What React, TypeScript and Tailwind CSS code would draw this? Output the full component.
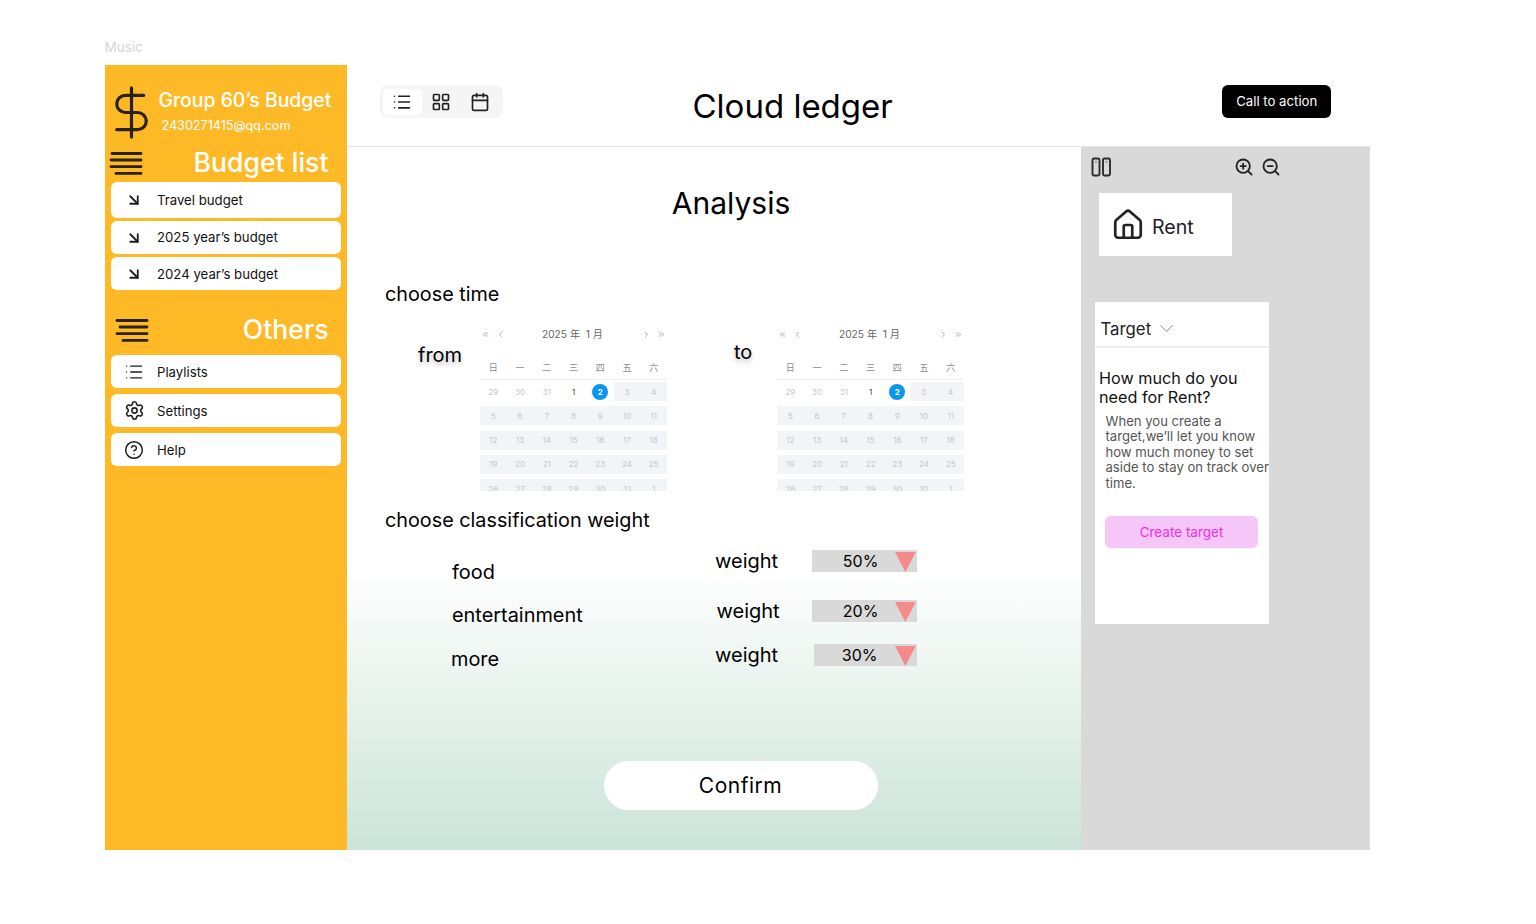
import { ArrowDownRight, Calendar, ChevronDown, ChevronLeft, ChevronRight, ChevronsLeft, ChevronsRight, CircleHelp, DollarSign, House, LayoutGrid, List, Settings, ZoomIn, ZoomOut } from "lucide-react";
import type { ReactNode } from "react";

const Bars = ({ first }: { first?: boolean }) => (
  <svg width="34" height="25" viewBox="0 0 34 25" fill="none" stroke="#2a2211" strokeWidth="2.8" strokeLinecap="round">
    {first ? (
      <>
        <path d="M3 2.5H32" /><path d="M2 9H32" /><path d="M2 15.7H32" /><path d="M7 22.4H32" />
      </>
    ) : (
      <>
        <path d="M2 2.5H32" /><path d="M5 9H32" /><path d="M2 15.7H32" /><path d="M8 22.4H32" />
      </>
    )}
  </svg>
);

const Item = ({ icon, label, cls, textCls }: { icon: ReactNode; label: string; cls: string; textCls: string }) => (
  <div className={`flex items-center bg-white rounded-[6px] text-[13.2px] text-[#111] ${cls}`}>
    <span className="w-[46px] flex justify-center text-[#1e1e1e]">{icon}</span>
    <span className={textCls}>{label}</span>
  </div>
);

const weeks = [
  ["29", "30", "31", "1", "2", "3", "4"],
  ["5", "6", "7", "8", "9", "10", "11"],
  ["12", "13", "14", "15", "16", "17", "18"],
  ["19", "20", "21", "22", "23", "24", "25"],
  ["26", "27", "28", "29", "30", "31", "1"],
];

const CalendarBox = () => (
  <div className="w-[187px] h-[167.5px] overflow-hidden text-[8px] text-[#c4c7cc]">
    <div className="h-[22px] flex items-center justify-between px-[1px] text-[#8d9095]">
      <div className="flex gap-[6px]">
        <ChevronsLeft size={9} />
        <ChevronLeft size={9} />
      </div>
      <span className="text-[10.2px] text-[#666] pr-[2px]">2025 年&nbsp; 1 月</span>
      <div className="flex gap-[6px]">
        <ChevronRight size={9} />
        <ChevronsRight size={9} />
      </div>
    </div>
    <div className="mt-[11px] h-[23px] flex items-center border-b border-[#eceef1] text-[#8a8d92]">
      {["日", "一", "二", "三", "四", "五", "六"].map((d) => (
        <span key={d} className="flex-1 text-center text-[9px]">{d}</span>
      ))}
    </div>
    <div className="mt-[2.5px] flex flex-col gap-[5.3px]">
      {weeks.map((w, i) => (
        <div key={i} className={`flex items-center h-[19px] shrink-0 ${i === 0 ? "" : "bg-[#f3f4f8]"}`}>
          {w.map((d, j) => (
            <span key={j} className={`flex-1 h-full flex items-center justify-center ${i === 0 && j > 4 ? "bg-[#f3f4f8]" : ""} ${i === 0 && j === 3 ? "text-[#444]" : ""}`}>
              {i === 0 && j === 4 ? (
                <span className="w-[16px] h-[16px] rounded-full bg-[#0d96ee] text-white font-bold flex items-center justify-center">2</span>
              ) : d}
            </span>
          ))}
        </div>
      ))}
    </div>
  </div>
);

const WeightRow = ({ value, cls, barCls, textCls }: { value: string; cls: string; barCls: string; textCls: string }) => (
  <div className={`flex items-center justify-between ${cls}`}>
    <span className="text-[20px] leading-none">weight</span>
    <div className={`h-[22px] bg-[#d9d9d9] flex items-center text-[16px] ${barCls}`}>
      <span className={`text-center ${textCls}`}>{value}</span>
      <svg width="22" height="21" viewBox="0 0 22 21"><polygon points="0,1 21,1 10.5,21" fill="#f58a8b" /></svg>
    </div>
  </div>
);

export default function App() {
  return (
    <div className="w-[1536px] h-[924px] bg-white pl-[104.5px] pt-[40px] font-['Inter','Noto_Sans_CJK_SC',sans-serif] text-black overflow-hidden">
      <div className="h-[25px] text-[13.5px] leading-[15px] text-[#d6d6d6]">Music</div>
      <div className="flex w-[1266px] h-[784.5px]">
        <aside className="w-[242.5px] shrink-0 bg-[#feb927] text-white px-[6.5px]">
          <div className="flex h-[77px] pt-[17.5px] -ml-[6.5px]">
            <DollarSign size={59} strokeWidth={1.3} color="#2a2211" className="ml-[-2.5px] shrink-0" />
            <div className="-ml-[2.5px] pt-[5.5px] whitespace-nowrap">
              <div className="text-[19.4px] leading-[24px] font-medium">Group 60’s Budget</div>
              <div className="text-[12.6px] leading-[16px] mt-[6px] ml-[3px]">2430271415@qq.com</div>
            </div>
          </div>
          <div className="flex items-center justify-between h-[40px] pt-[2px] -ml-[2px] pr-[12px]">
            <Bars first />
            <span className="text-[26.6px] font-medium">Budget list</span>
          </div>
          <div className="flex flex-col gap-[3px]">
            <Item cls="h-[36px]" textCls="pt-[1px]" icon={<ArrowDownRight size={18} strokeWidth={2.4} />} label="Travel budget" />
            <Item cls="h-[33px]" textCls="pt-[1px]" icon={<ArrowDownRight size={18} strokeWidth={2.4} />} label="2025 year’s budget" />
            <Item cls="h-[33px]" textCls="pt-[2px]" icon={<ArrowDownRight size={18} strokeWidth={2.4} />} label="2024 year’s budget" />
          </div>
          <div className="flex items-center justify-between h-[65px] pt-[15px] pl-[3.5px] pr-[12px]">
            <Bars />
            <span className="text-[26.6px] font-medium">Others</span>
          </div>
          <div className="flex flex-col gap-[6px]">
            <Item cls="h-[33px]" textCls="pt-[2px]" icon={<List size={20} strokeWidth={1.6} />} label="Playlists" />
            <Item cls="h-[33px]" textCls="pt-[2px]" icon={<Settings size={21} strokeWidth={1.8} />} label="Settings" />
            <Item cls="h-[33px]" textCls="pt-[2px]" icon={<CircleHelp size={20} strokeWidth={1.8} />} label="Help" />
          </div>
        </aside>

        <div className="flex-1 flex flex-col min-w-0">
          <header className="h-[82px] shrink-0 flex items-center border-b-[1.5px] border-[#e6e6e6]">
            <div className="ml-[32.5px] -mt-[8px] w-[123px] h-[33px] bg-[#f5f5f5] rounded-[8px] flex items-center px-[3px] text-[#222]">
              <span className="w-[39px] h-[26px] bg-white rounded-[5px] flex items-center justify-center"><List size={20} strokeWidth={1.9} /></span>
              <span className="w-[39px] flex justify-center"><LayoutGrid size={20} strokeWidth={2} /></span>
              <span className="w-[39px] flex justify-center"><Calendar size={20} strokeWidth={2} /></span>
            </div>
            <h1 className="ml-[190px] text-[33px] font-normal leading-none mt-[1px]">Cloud ledger</h1>
            <div className="ml-[329.5px] -mt-[8px] w-[109px] h-[33px] bg-black text-white rounded-[6px] flex items-center justify-center text-[13.2px]">Call to action</div>
          </header>
          <div className="flex-1 flex min-h-0">
            <main className="w-[734px] h-full bg-gradient-to-b from-white from-[60%] to-[#cbe4d8]">
              <h2 className="text-[30px] leading-none font-normal text-center pt-[40.5px] w-[768px]">Analysis</h2>
              <div className="ml-[38px] mt-[62px] text-[19.8px] leading-[28px]">choose time</div>
              <div className="flex mt-[16px]">
                <span className="ml-[71px] mt-[17px] text-[20px] leading-[28px] w-[62px] [text-shadow:0_3px_4px_#0004]">from</span>
                <CalendarBox />
                <span className="ml-[67px] mt-[14px] text-[20px] leading-[28px] w-[43px] [text-shadow:0_3px_4px_#0004]">to</span>
                <CalendarBox />
              </div>
              <div className="ml-[38px] mt-[15px] text-[19.8px] leading-[28px]">choose classification weight</div>
              <div className="flex mt-[16px]">
                <div className="ml-[105px] w-[263px] pt-[8px] text-[19.9px] leading-[28px] flex flex-col gap-[15px]">
                  <span>food</span>
                  <span>entertainment</span>
                  <span className="-ml-[1px] mt-[1px]">more</span>
                </div>
                <div className="w-[202px] flex flex-col">
                  <WeightRow value="50%" cls="" barCls="w-[105px]" textCls="w-[84px] pl-[14px]" />
                  <WeightRow value="20%" cls="mt-[28px] pl-[1.5px]" barCls="w-[105px]" textCls="w-[84px] pl-[14px]" />
                  <WeightRow value="30%" cls="mt-[22px]" barCls="w-[103px]" textCls="w-[82px] pl-[10px]" />
                </div>
              </div>
              <div className="mt-[88px] ml-[256.5px] w-[274px] h-[49px] bg-white rounded-full flex items-center justify-center text-[21px] font-normal tracking-[0.5px]">Confirm</div>
            </main>
            <section className="w-[289px] shrink-0 bg-[#d9d9d9] text-[#222]">
              <div className="flex items-center justify-between h-[40px] pl-[10px] pr-[89px]">
                <svg width="21" height="20" viewBox="0 0 21 20" fill="none" stroke="#2b2b2b" strokeWidth="1.9"><rect x="1.5" y="1.5" width="7" height="17" rx="1.5" /><rect x="12" y="1.5" width="7" height="17" rx="1.5" /><path d="M5 4.5v.8M15.5 4.5v.8" /></svg>
                <div className="flex gap-[7px]"><ZoomIn size={20} strokeWidth={2.2} /><ZoomOut size={20} strokeWidth={2.2} /></div>
              </div>
              <div className="ml-[18px] mt-[6px] w-[133px] h-[63px] bg-white flex items-center pl-[12px] gap-[7px] text-[19.6px]">
                <House size={34} strokeWidth={1.9} />
                <span className="mt-[6px]">Rent</span>
              </div>
              <div className="ml-[14px] mt-[46px] w-[174px] h-[322px] bg-white overflow-hidden">
                <div className="h-[46px] border-b-2 border-[#eeeeee] flex items-center pl-[5.5px] pt-[9px] gap-[4px] text-[16.8px] leading-[24px]">
                  <span>Target</span>
                  <ChevronDown size={23} strokeWidth={0.8} className="text-[#666]" />
                </div>
                <div className="ml-[4px] mt-[20.5px] text-[16.2px] leading-[19px] text-[#111]">How much do you<br />need for Rent?</div>
                <div className="ml-[10.5px] mt-[7px] w-[170px] text-[13.1px] leading-[15.5px] text-[#555] whitespace-nowrap">When you create a<br />target,we’ll let you know<br />how much money to set<br />aside to stay on track over<br />time.</div>
                <div className="ml-[10px] mt-[25px] w-[153px] h-[32px] rounded-[6px] bg-[#f5c6f8] text-[#ee2fe9] text-[13.5px] flex items-center justify-center">Create target</div>
              </div>
            </section>
          </div>
        </div>
      </div>
    </div>
  );
}
